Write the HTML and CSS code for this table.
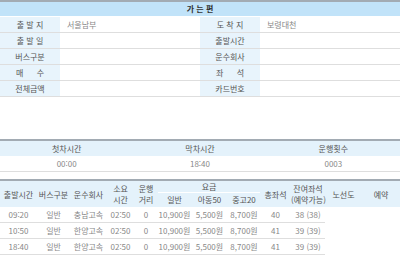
FILE: index.html
```html
<!DOCTYPE html>
<html lang="ko">
<head>
<meta charset="utf-8">
<link rel="stylesheet" href="styles.css">
</head>
<body>
<table class="info">
  <colgroup><col class="c-lab"><col class="c-val"><col class="c-lab"><col class="c-val"></colgroup>
  <tr class="title"><th colspan="4">가 는 편</th></tr>
  <tr><th>출 발 지</th><td>서울남부</td><th>도 착 지</th><td>보령대천</td></tr>
  <tr><th>출 발 일</th><td></td><th>출발시간</th><td></td></tr>
  <tr><th>버스구분</th><td></td><th>운수회사</th><td></td></tr>
  <tr><th>매&nbsp;&nbsp;&nbsp;&nbsp;&nbsp;&nbsp;수</th><td></td><th>좌&nbsp;&nbsp;&nbsp;&nbsp;&nbsp;&nbsp;석</th><td></td></tr>
  <tr><th>전체금액</th><td></td><th>카드번호</th><td></td></tr>
</table>

<table class="summary">
  <tr><th>첫차시간</th><th>막차시간</th><th>운행횟수</th></tr>
  <tr><td>00:00</td><td>18:40</td><td>0003</td></tr>
</table>

<table class="list">
  <colgroup>
    <col class="w37"><col class="w33"><col class="w37"><col class="w27"><col class="w24">
    <col class="w33"><col class="w37"><col class="w32"><col class="w31"><col class="w34">
    <col class="w37"><col class="w38">
  </colgroup>
  <tr class="h1">
    <th rowspan="2">출발시간</th><th rowspan="2">버스구분</th><th rowspan="2">운수회사</th>
    <th rowspan="2">소요<br>시간</th><th rowspan="2">운행<br>거리</th>
    <th colspan="3" class="fare">요금</th>
    <th rowspan="2">총좌석</th><th rowspan="2">잔여좌석<br>(예약가능)</th>
    <th rowspan="2">노선도</th><th rowspan="2">예약</th>
  </tr>
  <tr class="h2"><th>일반</th><th>아동50</th><th>중고20</th></tr>
  <tr><td>09:20</td><td>일반</td><td>충남고속</td><td>02:50</td><td>0</td><td>10,900원</td><td>5,500원</td><td>8,700원</td><td>40</td><td>38 (38)</td></tr>
  <tr><td>10:50</td><td>일반</td><td>한양고속</td><td>02:50</td><td>0</td><td>10,900원</td><td>5,500원</td><td>8,700원</td><td>41</td><td>39 (39)</td></tr>
  <tr><td>18:40</td><td>일반</td><td>한양고속</td><td>02:50</td><td>0</td><td>10,900원</td><td>5,500원</td><td>8,700원</td><td>41</td><td>39 (39)</td></tr>
</table>
</body>
</html>
```

FILE: styles.css
```css
body {
  margin: 0;
  width: 400px;
  font-family: "Noto Sans CJK KR", "Noto Sans", sans-serif;
  font-size: 8px;
  color: #888;
  background: #fff;
}
table {
  width: 400px;
  border-collapse: separate;
  border-spacing: 0;
  table-layout: fixed;
}
th, td {
  padding: 0;
  font-weight: normal;
  text-align: center;
  white-space: nowrap;
}

/* section 1 */
.info { border-top: 2px solid #a2abb3; }
.c-lab { width: 60px; }
.c-val { width: 140px; }
.info .title th {
  line-height: 14px;
  background: #c1e3f9;
  border-bottom: 1px solid #fff;
  font-weight: bold;
  color: #333;
}
.info th {
  line-height: 15px;
  background: #e8f4fc;
  color: #555;
  border-bottom: 1px solid #dedede;
}
.info td {
  line-height: 15px;
  text-align: left;
  padding-left: 7px;
  border-bottom: 1px solid #dedede;
}

/* section 2 */
.summary {
  margin-top: 42px;
  border-top: 2px solid #a2abb3;
}
.summary th {
  line-height: 15px;
  background: #e4f2fb;
  color: #555;
}
.summary td {
  line-height: 15px;
  border-bottom: 1px solid #dedede;
}

/* section 3 */
.list {
  margin-top: 7px;
  border-top: 2px solid #a2abb3;
}
.w24 { width: 24px; } .w27 { width: 27px; } .w31 { width: 31px; }
.w32 { width: 32px; } .w33 { width: 33px; } .w34 { width: 34px; }
.w37 { width: 37px; } .w38 { width: 38px; }
.list th {
  background: #e4f2fb;
  color: #555;
  line-height: 11px;
}
.list .h1 .fare {
  line-height: 11px;
  border-bottom: 1px solid #fff;
}
.list .h2 th { line-height: 14px; }
.list td {
  line-height: 15px;
  border-bottom: 1px solid #dedede;
}
```
